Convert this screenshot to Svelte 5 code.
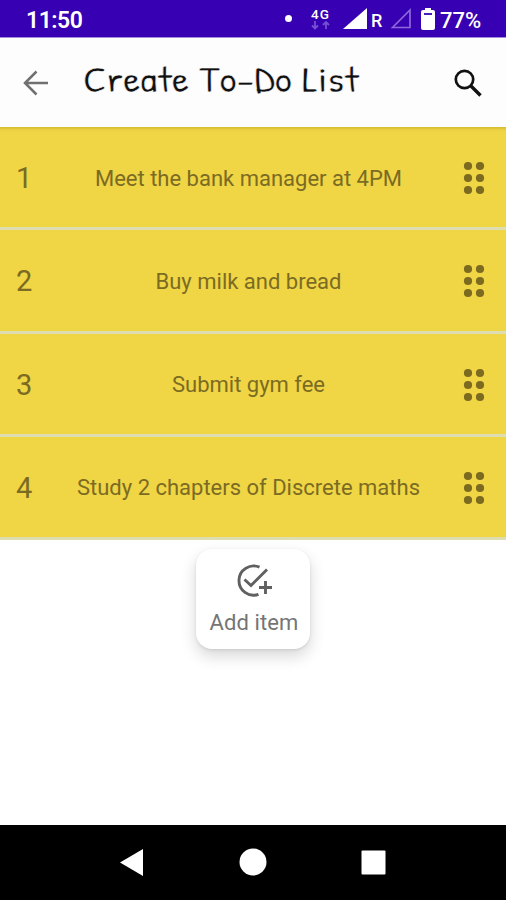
<script>
  const items = [
    "Meet the bank manager at 4PM",
    "Buy milk and bread",
    "Submit gym fee",
    "Study 2 chapters of Discrete maths"
  ];
  const dots = [5, 17, 29];
</script>

<div class="screen">
  <div class="status-bar">
    <span class="time">11:50</span>
    <span class="notification"></span>
    <div class="network">
      <span>4G</span>
      <svg width="19" height="9" viewBox="0 0 19 9">
        <path d="M4 0v7M1 4.5l3 3 3-3M15 8V1M12 4l3-3 3 3" />
      </svg>
    </div>
    <svg class="signal" width="24" height="21" viewBox="0 0 24 21">
      <path d="M0 21L24 0v21z" fill="#fff" />
    </svg>
    <span class="roaming">R</span>
    <svg class="signal-empty" width="22" height="22" viewBox="0 0 22 22">
      <path d="M2.500 20.500L20 3v17.500z" fill="none" stroke="#8d69db" stroke-width="1.700" />
    </svg>
    <svg class="battery" width="14" height="22" viewBox="0 0 14 22">
      <path d="M4 0h6v2h2a2 2 0 0 1 2 2v16a2 2 0 0 1-2 2H2a2 2 0 0 1-2-2V4a2 2 0 0 1 2-2h2z" fill="#fff" />
      <path d="M3 6h8" stroke="#3700b3" stroke-width="1.800" />
    </svg>
    <span class="percent">77%</span>
  </div>

  <header class="toolbar">
    <button class="back" aria-label="Back">
      <svg width="26" height="26" viewBox="0 0 26 26">
        <path d="M25 13H2M13.500 1.500L2 13l11.500 11.500" fill="none" stroke="#707070" stroke-width="2.500" />
      </svg>
    </button>
    <h1 class="title">Create To-Do List</h1>
    <button class="search" aria-label="Search">
      <svg width="28" height="28" viewBox="0 0 28 28">
        <circle cx="10.500" cy="10.500" r="8.700" fill="none" stroke="#111" stroke-width="2.700" />
        <path d="M17 17l9.500 9.500" stroke="#111" stroke-width="3.300" />
      </svg>
    </button>
  </header>

  <div class="list">
    {#each items as item, i}
      <div class="item">
        <span class="number">{i + 1}</span>
        <span class="text">{item}</span>
        <svg class="handle" width="22" height="34" viewBox="0 0 22 34">
          {#each dots as y}
            <circle cx="5" cy={y} r="4.100" />
            <circle cx="17" cy={y} r="4.100" />
          {/each}
        </svg>
      </div>
    {/each}
  </div>

  <div class="content">
    <button class="add-button">
      <svg width="36" height="34" viewBox="0 0 36 34">
        <path d="M23.500 3.200A14.600 14.600 0 1 0 22.500 30.300" />
        <path d="M8.500 15.500l6.500 6L31 5.500" />
        <path d="M29.500 17v13M23 23.500h13" />
      </svg>
      <span>Add item</span>
    </button>
  </div>

  <nav class="nav-bar">
    <svg width="506" height="75" viewBox="0 0 506 75">
      <path d="M120 37.500L143 24v27z" />
      <circle cx="253" cy="37" r="13.500" />
      <rect x="361.500" y="25.500" width="24" height="24" rx="1" />
    </svg>
  </nav>
</div>

<style>
  :global(body) {
    background: #fff;
  }
  .screen {
    display: flex;
    flex-direction: column;
    width: 506px;
    height: 900px;
    overflow: hidden;
    font-family: Roboto, sans-serif;
  }
  button {
    padding: 0;
    border: none;
    background: none;
    font-family: inherit;
  }
  svg {
    display: block;
    flex: none;
  }
  .status-bar {
    box-sizing: border-box;
    display: flex;
    align-items: center;
    height: 38px;
    padding-left: 26px;
    background: #3700b3;
    border-bottom: 1px solid #a58ddd;
    color: #fff;
    white-space: nowrap;
  }
  .time {
    width: 259px;
    padding-top: 3px;
    font-size: 23px;
    font-weight: 600;
    letter-spacing: -0.5px;
  }
  .notification {
    width: 7px;
    height: 7px;
    border-radius: 50%;
    background: #fff;
  }
  .network {
    width: 32px;
    margin-left: 19px;
    font-size: 13.5px;
    font-weight: 500;
    line-height: 12px;
    letter-spacing: 1px;
  }
  .network svg {
    margin-top: 1px;
  }
  .network path {
    fill: none;
    stroke: #7650d2;
    stroke-width: 1.8;
  }
  .roaming {
    width: 19px;
    margin-left: 4px;
    padding-top: 3px;
    font-size: 18px;
    font-weight: 500;
  }
  .signal-empty {
    margin-top: -1px;
  }
  .battery {
    margin-left: 9px;
  }
  .percent {
    margin-left: 5px;
    padding-top: 3px;
    font-size: 22px;
    font-weight: 500;
  }
  .toolbar {
    display: flex;
    align-items: center;
    height: 89px;
    padding: 0 24px 0 23px;
    background: #fdfdfd;
  }
  .title {
    flex: 1;
    margin: -9px 0 0 34px;
    font-family: "Coming Soon", "Patrick Hand", "Indie Flower", cursive;
    font-size: 37px;
    font-weight: 400;
    color: #111;
    -webkit-text-stroke: 0.5px #fdfdfd;
    white-space: nowrap;
    transform: scaleX(1.165);
    transform-origin: left;
  }
  .item {
    box-sizing: border-box;
    display: flex;
    align-items: center;
    height: 103.25px;
    padding: 2px 20px 0 16px;
    background: #f0d545;
    border-bottom: 3px solid #deddb2;
    color: #7b6b23;
  }
  .item:first-child {
    background: linear-gradient(#d3bb30, #ecd142 3px, #f0d545 6px);
  }
  .number {
    width: 24px;
    font-size: 29px;
  }
  .text {
    flex: 1;
    padding-right: 6px;
    text-align: center;
    font-size: 22px;
    white-space: nowrap;
  }
  .handle {
    margin-right: 1px;
    fill: #7b6a20;
  }
  .content {
    flex: 1;
    padding-top: 9px;
  }
  .add-button {
    display: flex;
    flex-direction: column;
    align-items: center;
    width: 114px;
    height: 100px;
    margin: 0 auto;
    padding: 15px 0 0 2px;
    border-radius: 16px;
    background: #fff;
    box-shadow: 0 7px 16px rgba(0, 0, 0, 0.16), 0 1px 3px rgba(0, 0, 0, 0.1);
    color: #757575;
    font-size: 22px;
    letter-spacing: 0.1px;
  }
  .add-button path {
    fill: none;
    stroke: #606060;
    stroke-width: 2.9;
  }
  .add-button span {
    margin-top: 12px;
  }
  .nav-bar {
    height: 75px;
    background: #000;
    fill: #fff;
  }
</style>
